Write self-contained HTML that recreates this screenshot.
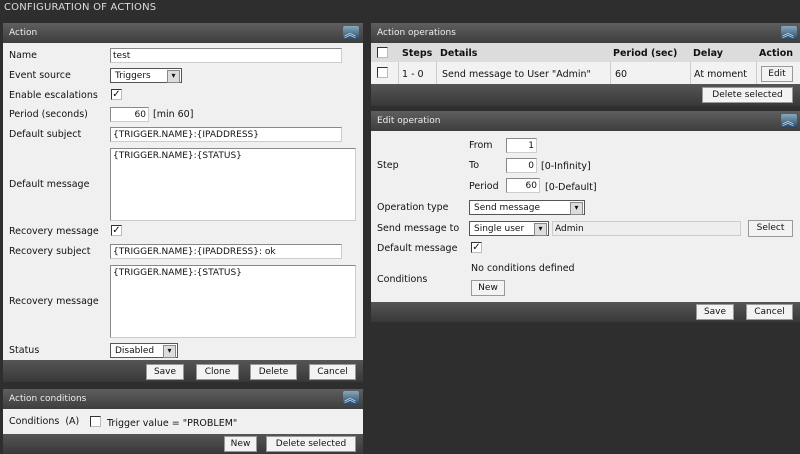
<!DOCTYPE html><html><head><meta charset="utf-8"><style>
*{box-sizing:border-box;margin:0;padding:0}
body{width:800px;height:454px;background:#2e2e2e;font-family:"DejaVu Sans","Liberation Sans",sans-serif;font-size:9.5px;color:#111;position:relative;overflow:hidden}
.a{position:absolute;white-space:nowrap}
.hd{position:absolute;height:20px;background:linear-gradient(#5e5e5e,#3e3e3e);color:#eee;padding:5px 6px;font-size:9px}
.bd{position:absolute;background:#f0f0f0}
.ft{position:absolute;background:linear-gradient(#555,#383838)}
.in{position:absolute;background:#fff;border:1px solid #888;border-right-color:#ccc;border-bottom-color:#ccc;padding:2px 2px;font-size:9px;white-space:nowrap;overflow:hidden}
.r{text-align:right}
.sel{position:absolute;background:#fff;border:1px solid #555;padding:2px 4px;font-size:9px}
.sel:after{content:"▾";position:absolute;right:1px;top:1px;width:11px;height:11px;background:#ddd;border:1px solid #888;font-size:8px;text-align:center;line-height:10px}
.btn{position:absolute;background:#f3f3f3;border:1px solid #999;height:16px;font-size:9px;text-align:center;line-height:14px}
.cb{position:absolute;width:11px;height:11px;border:1px solid #333;border-right-color:#bbb;border-bottom-color:#bbb;background:#fff}
.ck{position:absolute;width:11px;height:11px;border:1px solid #333;border-right-color:#bbb;border-bottom-color:#bbb;background:#fff;font-size:10px;font-weight:bold;line-height:9px;text-align:center}
.ic{position:absolute;width:16px;height:14px;background:linear-gradient(#8ab,#246);border-radius:2px}
.ic:after{content:"︽";position:absolute;left:1px;top:-2px;color:#cde;font-size:12px}
</style></head><body>
<div class="a" style="left:4px;top:2px;color:#ddd;font-size:10px;letter-spacing:.2px">CONFIGURATION OF ACTIONS</div>

<div class="hd" style="left:3px;top:23px;width:360px">Action</div><div class="ic" style="left:343px;top:26px"></div>
<div class="bd" style="left:3px;top:43px;width:360px;height:317px"></div>
<div class="a" style="left:9px;top:50px">Name</div><div class="in" style="left:110px;top:48px;width:232px;height:15px">test</div>
<div class="a" style="left:9px;top:70px">Event source</div><div class="sel" style="left:110px;top:68px;width:72px;height:15px">Triggers</div>
<div class="a" style="left:9px;top:90px">Enable escalations</div><div class="ck" style="left:111px;top:89px">✓</div>
<div class="a" style="left:9px;top:109px">Period (seconds)</div><div class="in r" style="left:110px;top:107px;width:39px;height:15px">60</div><div class="a" style="left:153px;top:109px">[min 60]</div>
<div class="a" style="left:9px;top:129px">Default subject</div><div class="in" style="left:110px;top:127px;width:232px;height:15px">{TRIGGER.NAME}:{IPADDRESS}</div>
<div class="in" style="left:110px;top:148px;width:246px;height:73px;white-space:normal">{TRIGGER.NAME}:{STATUS}</div><div class="a" style="left:9px;top:179px">Default message</div>
<div class="a" style="left:9px;top:226px">Recovery message</div><div class="ck" style="left:111px;top:225px">✓</div>
<div class="a" style="left:9px;top:246px">Recovery subject</div><div class="in" style="left:110px;top:244px;width:232px;height:15px">{TRIGGER.NAME}:{IPADDRESS}: ok</div>
<div class="in" style="left:110px;top:265px;width:246px;height:73px">{TRIGGER.NAME}:{STATUS}</div><div class="a" style="left:9px;top:296px">Recovery message</div>
<div class="a" style="left:9px;top:345px">Status</div><div class="sel" style="left:110px;top:343px;width:68px;height:15px">Disabled</div>
<div class="ft" style="left:3px;top:360px;width:360px;height:22px"></div>
<div class="btn" style="left:146px;top:364px;width:38px">Save</div><div class="btn" style="left:196px;top:364px;width:43px">Clone</div><div class="btn" style="left:250px;top:364px;width:47px">Delete</div><div class="btn" style="left:309px;top:364px;width:47px">Cancel</div>

<div class="hd" style="left:3px;top:389px;width:360px">Action conditions</div><div class="ic" style="left:343px;top:391px"></div>
<div class="bd" style="left:3px;top:409px;width:360px;height:25px"></div>
<div class="a" style="left:9px;top:416px">Conditions&nbsp; (A)</div><div class="cb" style="left:90px;top:416px"></div><div class="a" style="left:107px;top:418px">Trigger value = "PROBLEM"</div>
<div class="ft" style="left:3px;top:434px;width:360px;height:20px"></div>
<div class="btn" style="left:224px;top:436px;width:33px">New</div><div class="btn" style="left:266px;top:436px;width:90px">Delete selected</div>

<div class="hd" style="left:371px;top:23px;width:429px">Action operations</div><div class="ic" style="left:781px;top:26px"></div>
<div class="bd" style="left:371px;top:43px;width:429px;height:19px;background:#dcdcdc"></div>
<div class="bd" style="left:371px;top:62px;width:429px;height:22px;background:#f2f2f2"></div>
<div class="cb" style="left:377px;top:47px"></div>
<div class="a" style="left:402px;top:48px;font-weight:bold">Steps</div><div class="a" style="left:440px;top:48px;font-weight:bold">Details</div><div class="a" style="left:613px;top:48px;font-weight:bold">Period (sec)</div><div class="a" style="left:693px;top:48px;font-weight:bold">Delay</div><div class="a" style="left:759px;top:48px;font-weight:bold">Action</div>
<div class="a" style="left:398px;top:62px;width:1px;height:22px;background:#ccc"></div><div class="a" style="left:436px;top:62px;width:1px;height:22px;background:#ccc"></div><div class="a" style="left:610px;top:62px;width:1px;height:22px;background:#ccc"></div><div class="a" style="left:690px;top:62px;width:1px;height:22px;background:#ccc"></div><div class="a" style="left:756px;top:62px;width:1px;height:22px;background:#ccc"></div>
<div class="cb" style="left:377px;top:67px"></div>
<div class="a" style="left:402px;top:69px">1 - 0</div><div class="a" style="left:442px;top:69px">Send message to User "Admin"</div><div class="a" style="left:615px;top:69px">60</div><div class="a" style="left:694px;top:69px">At moment</div>
<div class="btn" style="left:761px;top:66px;width:32px">Edit</div>
<div class="ft" style="left:371px;top:84px;width:429px;height:22px"></div>
<div class="btn" style="left:702px;top:87px;width:91px">Delete selected</div>

<div class="hd" style="left:371px;top:111px;width:429px">Edit operation</div><div class="ic" style="left:781px;top:114px"></div>
<div class="bd" style="left:371px;top:131px;width:429px;height:171px"></div>
<div class="a" style="left:469px;top:140px">From</div><div class="in r" style="left:506px;top:138px;width:31px;height:15px">1</div>
<div class="a" style="left:377px;top:160px">Step</div>
<div class="a" style="left:469px;top:160px">To</div><div class="in r" style="left:506px;top:158px;width:31px;height:15px">0</div><div class="a" style="left:541px;top:161px">[0-Infinity]</div>
<div class="a" style="left:469px;top:181px">Period</div><div class="in r" style="left:506px;top:178px;width:34px;height:15px">60</div><div class="a" style="left:545px;top:182px">[0-Default]</div>
<div class="a" style="left:377px;top:202px">Operation type</div><div class="sel" style="left:469px;top:200px;width:116px;height:15px">Send message</div>
<div class="a" style="left:377px;top:223px">Send message to</div><div class="sel" style="left:469px;top:221px;width:80px;height:15px">Single user</div>
<div class="in" style="left:552px;top:221px;width:189px;height:15px;background:#eee;border-color:#ccc">Admin</div>
<div class="btn" style="left:748px;top:220px;width:45px;height:17px">Select</div>
<div class="a" style="left:377px;top:243px">Default message</div><div class="ck" style="left:471px;top:242px">✓</div>
<div class="a" style="left:471px;top:263px">No conditions defined</div>
<div class="a" style="left:377px;top:274px">Conditions</div>
<div class="btn" style="left:471px;top:280px;width:34px">New</div>
<div class="ft" style="left:371px;top:302px;width:429px;height:20px"></div>
<div class="btn" style="left:696px;top:304px;width:38px">Save</div><div class="btn" style="left:746px;top:304px;width:47px">Cancel</div>
</body></html>
